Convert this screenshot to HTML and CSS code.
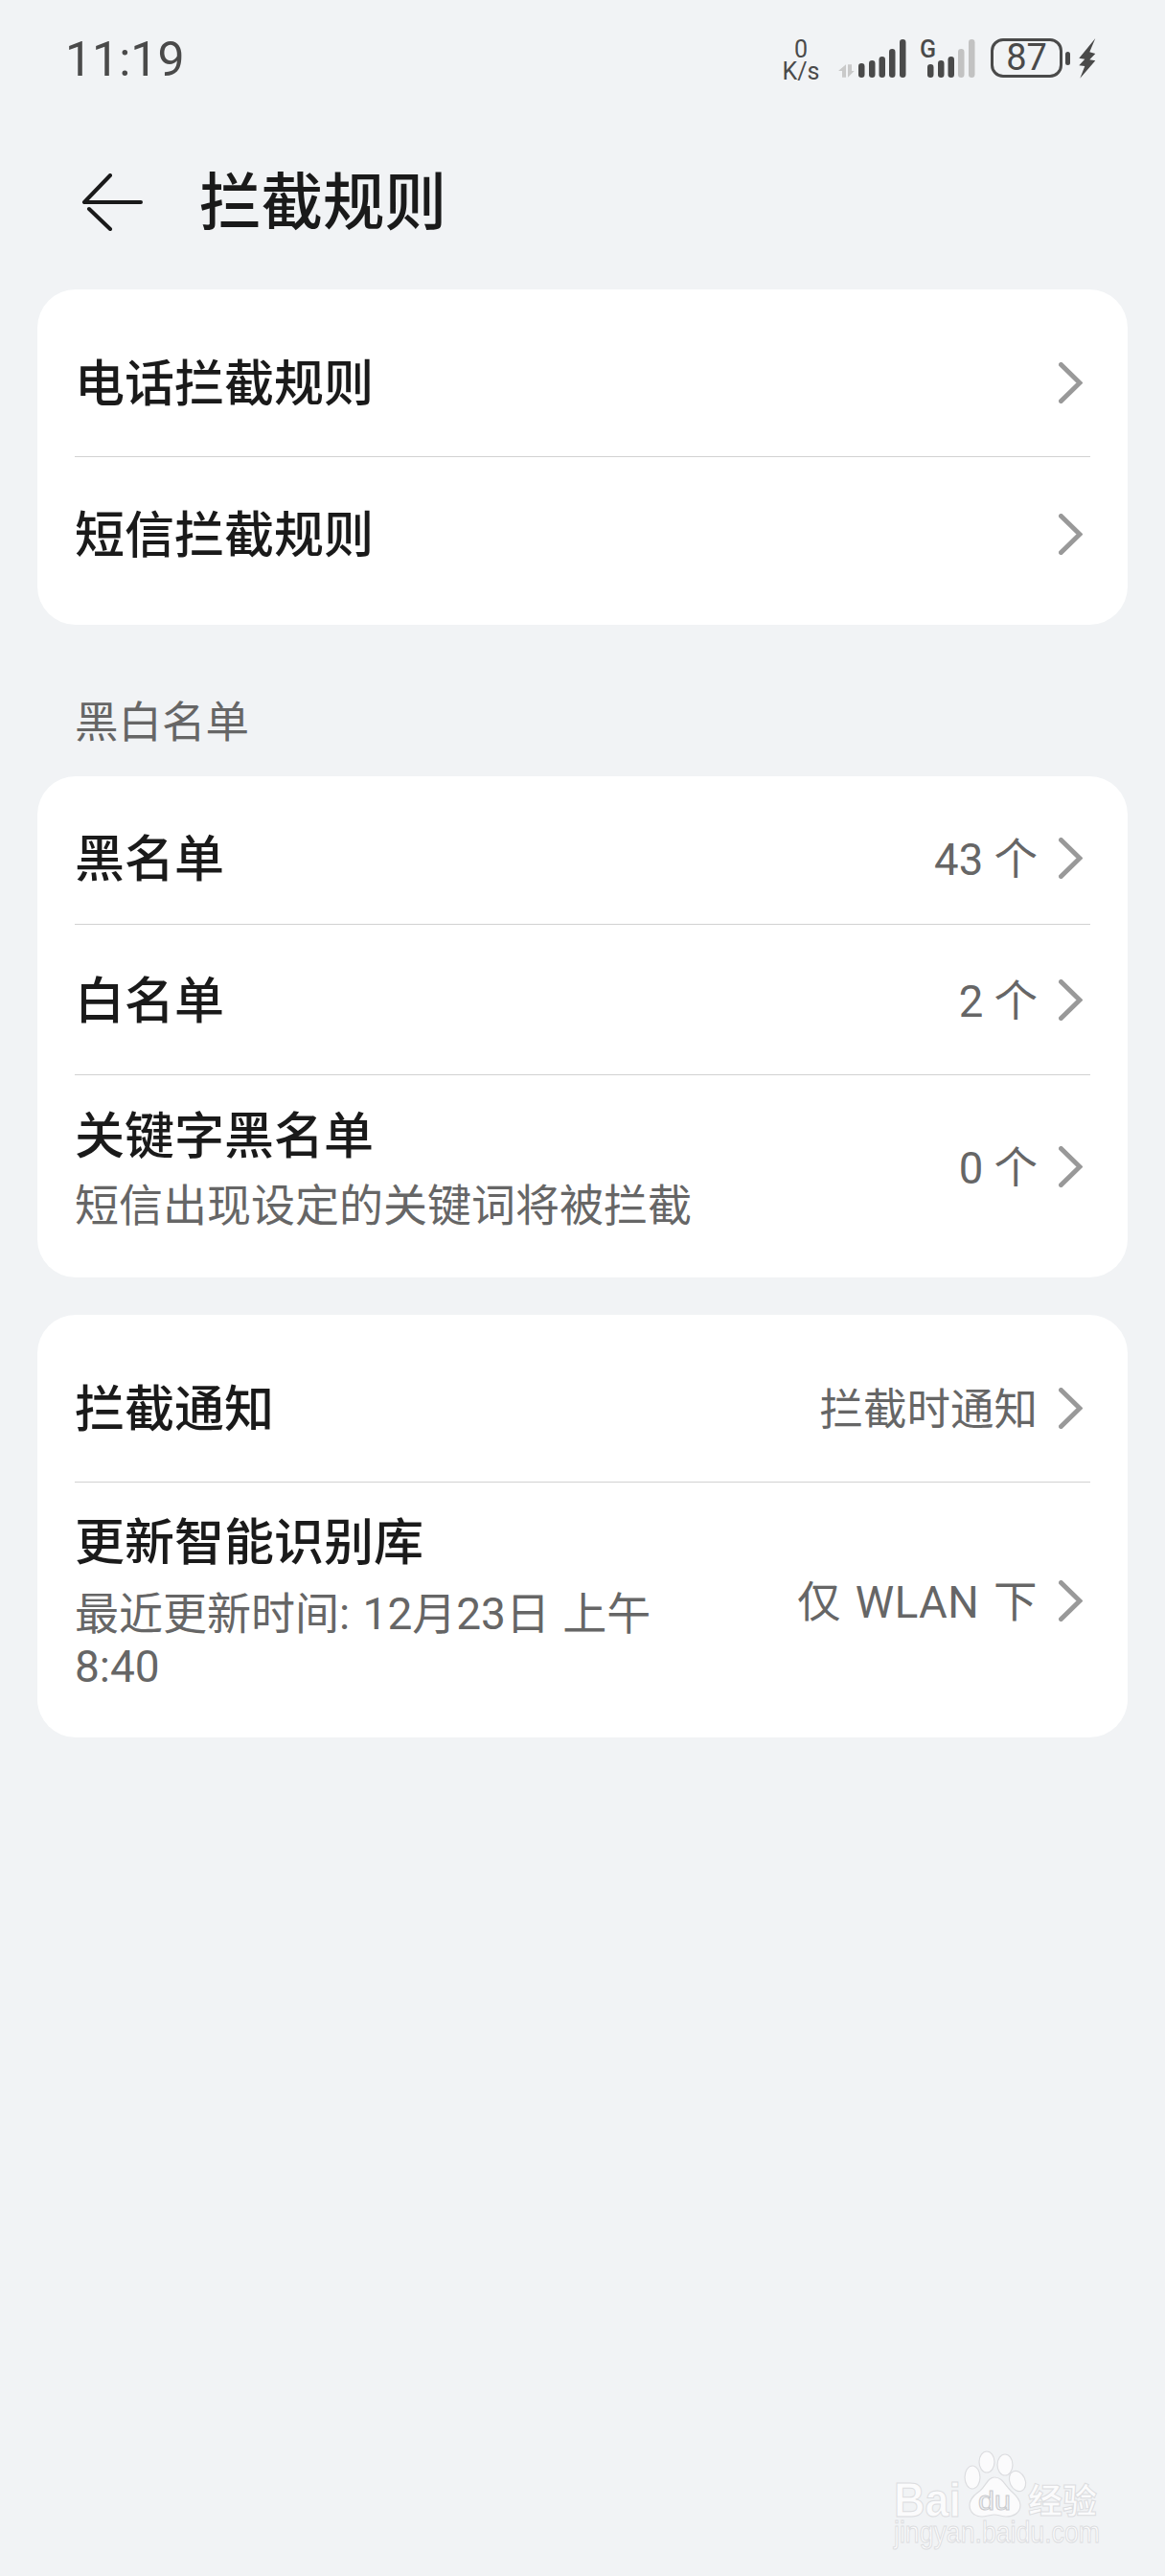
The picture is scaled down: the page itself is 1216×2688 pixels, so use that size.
FILE: index.html
```html
<!DOCTYPE html>
<html lang="zh-CN">
<head>
<meta charset="utf-8">
<title>拦截规则</title>
<link rel="stylesheet" href="styles.css">
</head>
<body>
<div class="page">
  <header class="status">
    <span class="time">11:19</span>
    <div class="status-icons">
      <div class="speed">0<br>K/s</div>
      <svg class="sig1" width="72" height="42" viewBox="0 0 72 42">
        <g fill="#c9c9c9"><path d="M8 27.300L0 34h4v6.700h4z"/><path d="M10 27.300h4V34h2.700L10 40.700z"/></g>
        <g fill="#4a4a4a"><rect x="21" y="26" width="6.500" height="15" rx="3.200"/><rect x="32" y="23" width="6.500" height="18" rx="3.200"/><rect x="42.500" y="19" width="6.500" height="22" rx="3.200"/><rect x="53" y="11" width="6.500" height="30" rx="3.200"/><rect x="64" y="1" width="6.500" height="40" rx="3.200"/></g>
      </svg>
      <div class="sim2">
        <span class="g">G</span>
        <svg width="50" height="42" viewBox="0 0 50 42">
          <g fill="#4a4a4a"><rect x="0" y="27" width="6.500" height="14" rx="3.200"/><rect x="11" y="23" width="6.500" height="18" rx="3.200"/><rect x="21.500" y="19" width="6.500" height="22" rx="3.200"/></g>
          <g fill="#c2c2c2"><rect x="32" y="11" width="6.500" height="30" rx="3.200"/><rect x="43" y="1" width="6.500" height="40" rx="3.200"/></g>
        </svg>
      </div>
      <div class="battery"><span class="batt-body">87</span><span class="batt-nub"></span></div>
      <svg class="bolt" width="20" height="42" viewBox="0 0 20 42"><path fill="#4a4a4a" d="M17.300 0L.3 20.700l6 1-6 6.600 6 .7-5 12.700 16-18.400-6-1 6-6.300-6-1.700z"/></svg>
    </div>
  </header>

  <div class="appbar">
    <svg class="back" width="66" height="60" viewBox="0 0 66 60" fill="none" stroke="#1a1a1a" stroke-width="4" stroke-linecap="round" stroke-linejoin="round">
      <path d="M30 2L3 30H62"/><path d="M8 37L30 58"/>
    </svg>
    <h1 class="title">拦截规则</h1>
  </div>

  <section class="card card-a">
    <div class="row row-a1"><div class="main"><div class="name">电话拦截规则</div></div><svg class="chev" width="25" height="43" viewBox="0 0 25 43"><path d="M2.500 2.500L22 21.500 2.500 40.500"/></svg></div>
    <div class="row row-a2"><div class="main"><div class="name">短信拦截规则</div></div><svg class="chev" width="25" height="43" viewBox="0 0 25 43"><path d="M2.500 2.500L22 21.500 2.500 40.500"/></svg></div>
  </section>

  <div class="section-head">黑白名单</div>

  <section class="card card-b">
    <div class="row row-b1"><div class="main"><div class="name">黑名单</div></div><span class="value">43 个</span><svg class="chev" width="25" height="43" viewBox="0 0 25 43"><path d="M2.500 2.500L22 21.500 2.500 40.500"/></svg></div>
    <div class="row row-b2"><div class="main"><div class="name">白名单</div></div><span class="value">2 个</span><svg class="chev" width="25" height="43" viewBox="0 0 25 43"><path d="M2.500 2.500L22 21.500 2.500 40.500"/></svg></div>
    <div class="row row-b3"><div class="main main-two"><div class="name">关键字黑名单</div><div class="sub">短信出现设定的关键词将被拦截</div></div><span class="value">0 个</span><svg class="chev" width="25" height="43" viewBox="0 0 25 43"><path d="M2.500 2.500L22 21.500 2.500 40.500"/></svg></div>
  </section>

  <section class="card card-c">
    <div class="row row-c1"><div class="main"><div class="name">拦截通知</div></div><span class="value">拦截时通知</span><svg class="chev" width="25" height="43" viewBox="0 0 25 43"><path d="M2.500 2.500L22 21.500 2.500 40.500"/></svg></div>
    <div class="row row-c2"><div class="main main-two"><div class="name">更新智能识别库</div><div class="sub sub-wrap">最近更新时间: 12月23日 上午 8:40</div></div><span class="value value-wide">仅 WLAN 下</span><svg class="chev" width="25" height="43" viewBox="0 0 25 43"><path d="M2.500 2.500L22 21.500 2.500 40.500"/></svg></div>
  </section>

  <svg class="watermark" width="316" height="158" viewBox="0 0 316 158">
    <g fill="#fbfbfc" stroke="#dcdde0" stroke-width="1.200">
      <ellipse cx="130" cy="39" rx="8" ry="11"/>
      <ellipse cx="149" cy="42" rx="8" ry="11"/>
      <ellipse cx="115" cy="55" rx="8" ry="12"/>
      <ellipse cx="162" cy="59" rx="8" ry="11" transform="rotate(-25 162 59)"/>
      <path d="M138 55c8 0 11 8 17 14 7 6 10 10 10 15 0 9-8 12-15 12-4 0-8-2-12-2s-9 2-13 2c-7 0-13-4-13-12 0-6 4-10 11-15 6-5 8-14 15-14z"/>
    </g>
    <text class="wm-text"><tspan class="wm-bai" x="33" y="96" textLength="70" lengthAdjust="spacingAndGlyphs">Bai</tspan><tspan class="wm-du" x="121" y="89" textLength="34" lengthAdjust="spacingAndGlyphs">du</tspan><tspan class="wm-jy" x="173" y="93" textLength="72" lengthAdjust="spacingAndGlyphs">经验</tspan><tspan class="wm-url" x="33" y="123" textLength="215" lengthAdjust="spacingAndGlyphs">jingyan.baidu.com</tspan></text>
  </svg>
</div>
</body>
</html>
```
FILE: styles.css
```css
* { box-sizing: border-box; }
html, body { margin: 0; padding: 0; }
body {
  background: #f1f3f5;
  font-family: Roboto, "Noto Sans CJK SC", sans-serif;
  color: #1a1a1a;
}
.page {
  position: relative;
  width: 1216px;
  height: 2688px;
  overflow: hidden;
  padding: 0 39px;
}
.status {
  height: 124px;
  margin: 0 -39px;
  padding: 40px 70px 0 68px;
  display: flex;
  justify-content: space-between;
  align-items: flex-start;
}
.time {
  font-size: 50px;
  line-height: 44px;
  color: #4a4a4a;
}
.status-icons {
  display: flex;
  align-items: flex-start;
  color: #4a4a4a;
}
.speed {
  width: 40px;
  text-align: center;
  font-size: 25px;
  line-height: 23px;
  white-space: nowrap;
}
.sig1 { margin-left: 19px; }
.sim2 { display: flex; margin-left: 13px; }
.g { font-size: 25px; line-height: 24px; font-weight: 500; width: 16px; margin-right: -8px; }
.battery { display: flex; align-items: center; margin-left: 16px; }
.batt-body {
  width: 75px;
  height: 41px;
  border: 3px solid #4a4a4a;
  border-radius: 13px;
  font-size: 38px;
  line-height: 35px;
  text-align: center;
}
.batt-nub {
  width: 5px;
  height: 14px;
  background: #4a4a4a;
  border-radius: 3px;
  margin-left: 3px;
}
.bolt { margin-left: 9px; }

.appbar {
  height: 178px;
  display: flex;
  align-items: flex-start;
  margin-left: 46px;
}
.back { flex: none; margin-top: 57px; width: 66px; }
.title {
  margin: 46px 0 0 57px;
  font-size: 64.500px;
  line-height: 84px;
  font-weight: 500;
}
.card {
  background: #fff;
  border-radius: 40px;
  padding: 0 39px;
}
.card-a { height: 350px; padding-top: 20px; }
.card-b { height: 523px; padding-top: 16px; }
.card-c { height: 441px; margin-top: 39px; padding-top: 20px; }
.row {
  display: flex;
  align-items: center;
  border-bottom: 1px solid #d2d2d2;
  padding-right: 8px;
}
.row:last-child { border-bottom: 0; }
.row-a1 { height: 155px; }
.row-a2 { height: 160px; }
.row-b1 { height: 139px; }
.row-b2 { height: 157px; }
.row-b3 { height: 190px; }
.row-c1 { height: 155px; }
.row-c2 { height: 246px; }
.main { flex: 1; min-width: 0; padding-top: 6px; }
.main-two { padding-top: 3px; }
.name { font-size: 52px; line-height: 70px; font-weight: 500; }
.sub { font-size: 46px; line-height: 55px; color: #666; margin-top: 9px; }
.sub-wrap { max-width: 640px; margin-top: 11px; word-spacing: 2px; }
.value {
  font-size: 45.500px;
  line-height: 60px;
  color: #666;
  white-space: nowrap;
  margin-right: 22px;
  padding-top: 5px;
}
.value-wide { word-spacing: 3px; letter-spacing: .5px; }
.chev { flex: none; fill: none; stroke: #999; stroke-width: 5; stroke-linecap: round; stroke-linejoin: miter; }
.section-head {
  height: 158px;
  padding: 78px 0 0 39px;
  font-size: 45.500px;
  line-height: 50px;
  color: #666;
}
.watermark { position: absolute; left: 900px; top: 2530px; }
.wm-text { fill: #fbfbfc; stroke: #dcdde0; stroke-width: 1; }
.wm-bai { font-family: "Liberation Sans", sans-serif; font-weight: 700; font-size: 50px; }
.wm-du { font-family: "Liberation Sans", sans-serif; font-size: 28px; fill: #f1f3f5; stroke: #c9cacd; }
.wm-jy { font-family: "Noto Sans CJK SC", sans-serif; font-size: 36px; font-weight: 700; }
.wm-url { font-family: "Liberation Sans", sans-serif; font-size: 31px; }
```
